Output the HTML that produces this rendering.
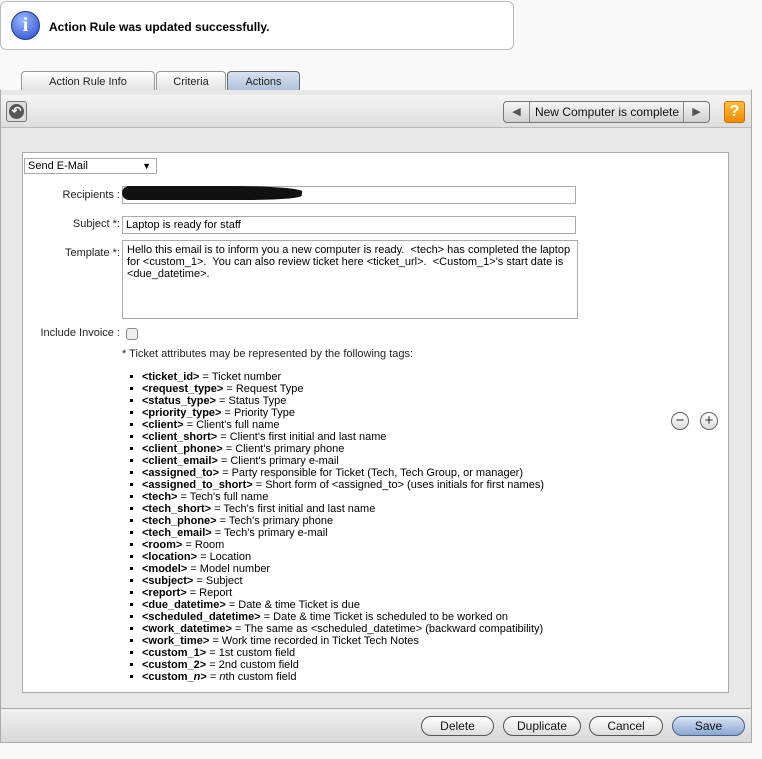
<!DOCTYPE html>
<html><head><style>
*{box-sizing:border-box;margin:0;padding:0}
body{width:762px;height:759px;background:#f9f9f9;font-family:"Liberation Sans",Arial,sans-serif;font-size:11px;color:#000;position:relative;overflow:hidden}
.a{position:absolute}
.msg{left:0;top:1px;width:514px;height:49px;border:1px solid #bbb;border-radius:6px;background:#fff}
.tab{top:71px;height:22px;border:1px solid #999;border-bottom:none;border-radius:4px 4px 0 0;background:linear-gradient(#fff,#ddd);text-align:center;line-height:20px;font-size:11px;color:#222}
.panel{left:0;top:90px;width:752px;height:653px;border:1px solid #aaa;border-top:none;background:#e8e8e8}
.inp{background:#fff;border:1px solid #aaa;height:18px;line-height:16px;padding-left:3px;font-size:11px}
.lbl{text-align:right;width:120px;font-size:11px;color:#222}
.btn{top:716px;height:20px;border:1px solid #555;border-radius:10px;background:linear-gradient(#fff,#ddd);text-align:center;line-height:18px;font-size:12px;color:#111}
ul{position:absolute;left:130px;top:371px;list-style:none;font-size:11px;line-height:12px}
li:before{content:"";display:inline-block;width:3px;height:3px;background:#000;margin:0 9px 2px 0;vertical-align:middle}
.circ{width:18px;height:18px;border:1px solid #666;border-radius:50%;background:linear-gradient(#fff,#ddd);text-align:center;line-height:15px;font-size:15px;color:#333}
</style></head><body>
<div class="a msg">
 <div class="a" style="left:10px;top:9px;width:29px;height:29px;border-radius:50%;background:radial-gradient(circle at 40% 30%,#9ab8ff,#2448c8);border:1px solid #1b3a9a;color:#fff;font:bold 20px 'Liberation Serif',serif;text-align:center;line-height:27px">i</div>
 <div class="a" style="left:48px;top:18px;font-weight:bold;font-size:12px">Action Rule was updated successfully.</div>
</div>
<div class="a tab" style="left:21px;width:134px">Action Rule Info</div>
<div class="a tab" style="left:156px;width:70px">Criteria</div>
<div class="a tab" style="left:227px;width:73px;background:linear-gradient(#d8e2f0,#a9bcd8);border-color:#667">Actions</div>
<div class="a" style="left:0;top:90px;width:751px;height:5px;background:linear-gradient(#b4c6df,#7f98bb)"></div>
<div class="a panel"></div>
<div class="a" style="left:1px;top:95px;width:750px;height:33px;background:linear-gradient(#f4f4f4,#dedede);border-bottom:1px solid #bbb"></div>
<div class="a" style="left:6px;top:101px;width:21px;height:21px;border:1px solid #777;border-radius:3px;background:#ddd"><div style="margin:2px;width:15px;height:15px;border-radius:50%;background:#555;color:#fff;font-size:12px;line-height:15px;text-align:center;font-weight:bold">&#8630;</div></div>
<div class="a" style="left:503px;top:101px;width:207px;height:22px;border:1px solid #777;border-radius:4px;background:linear-gradient(#f6f6f6,#d0d0d0)">
 <div class="a" style="left:0;top:0;width:26px;height:20px;border-right:1px solid #888;text-align:center;line-height:20px;color:#555">&#9664;</div>
 <div class="a" style="left:27px;top:0;width:152px;height:20px;text-align:center;line-height:20px;font-size:12px;color:#111">New Computer is complete</div>
 <div class="a" style="left:179px;top:0;width:26px;height:20px;border-left:1px solid #888;text-align:center;line-height:20px;color:#555">&#9654;</div>
</div>
<div class="a" style="left:724px;top:101px;width:21px;height:22px;border-radius:3px;background:linear-gradient(#ffc040,#f08a00);border:1px solid #d07000;color:#fff;font-weight:bold;font-size:16px;text-align:center;line-height:20px">?</div>
<div class="a" style="left:22px;top:152px;width:707px;height:541px;background:#fff;border:1px solid #aaa"></div>
<div class="a inp" style="left:24px;top:158px;width:133px;height:16px;line-height:14px">Send E-Mail<span class="a" style="right:5px;top:0;font-size:9px">&#9660;</span></div>
<div class="a lbl" style="top:189px;left:0">Recipients :</div>
<div class="a inp" style="left:122px;top:186px;width:454px"></div>
<div class="a" style="left:122px;top:186px;width:180px;height:14px;background:#111;border-radius:6px 40% 30% 8px;transform:skewX(-8deg)"></div>
<div class="a lbl" style="top:218px;left:0">Subject *:</div>
<div class="a inp" style="left:122px;top:216px;width:454px">Laptop is ready for staff</div>
<div class="a lbl" style="top:247px;left:0">Template *:</div>
<div class="a inp" style="left:122px;top:240px;width:456px;height:79px;line-height:12px;padding:3px 4px;font-size:11px">Hello this email is to inform you a new computer is ready.&nbsp; &lt;tech&gt; has completed the laptop for &lt;custom_1&gt;.&nbsp; You can also review ticket here &lt;ticket_url&gt;.&nbsp; &lt;Custom_1&gt;'s start date is &lt;due_datetime&gt;.</div>
<div class="a lbl" style="top:327px;left:0">Include Invoice :</div>
<div class="a" style="left:126px;top:328px;width:12px;height:12px;border:1px solid #888;border-radius:3px;background:#eee"></div>
<div class="a" style="left:122px;top:348px;color:#222">* Ticket attributes may be represented by the following tags:</div>
<ul>
<li><b>&lt;ticket_id&gt;</b> = Ticket number</li>
<li><b>&lt;request_type&gt;</b> = Request Type</li>
<li><b>&lt;status_type&gt;</b> = Status Type</li>
<li><b>&lt;priority_type&gt;</b> = Priority Type</li>
<li><b>&lt;client&gt;</b> = Client's full name</li>
<li><b>&lt;client_short&gt;</b> = Client's first initial and last name</li>
<li><b>&lt;client_phone&gt;</b> = Client's primary phone</li>
<li><b>&lt;client_email&gt;</b> = Client's primary e-mail</li>
<li><b>&lt;assigned_to&gt;</b> = Party responsible for Ticket (Tech, Tech Group, or manager)</li>
<li><b>&lt;assigned_to_short&gt;</b> = Short form of &lt;assigned_to&gt; (uses initials for first names)</li>
<li><b>&lt;tech&gt;</b> = Tech's full name</li>
<li><b>&lt;tech_short&gt;</b> = Tech's first initial and last name</li>
<li><b>&lt;tech_phone&gt;</b> = Tech's primary phone</li>
<li><b>&lt;tech_email&gt;</b> = Tech's primary e-mail</li>
<li><b>&lt;room&gt;</b> = Room</li>
<li><b>&lt;location&gt;</b> = Location</li>
<li><b>&lt;model&gt;</b> = Model number</li>
<li><b>&lt;subject&gt;</b> = Subject</li>
<li><b>&lt;report&gt;</b> = Report</li>
<li><b>&lt;due_datetime&gt;</b> = Date &amp; time Ticket is due</li>
<li><b>&lt;scheduled_datetime&gt;</b> = Date &amp; time Ticket is scheduled to be worked on</li>
<li><b>&lt;work_datetime&gt;</b> = The same as &lt;scheduled_datetime&gt; (backward compatibility)</li>
<li><b>&lt;work_time&gt;</b> = Work time recorded in Ticket Tech Notes</li>
<li><b>&lt;custom_1&gt;</b> = 1st custom field</li>
<li><b>&lt;custom_2&gt;</b> = 2nd custom field</li>
<li><b>&lt;custom_<i>n</i>&gt;</b> = <i>n</i>th custom field</li>
</ul>
<div class="a circ" style="left:671px;top:412px">&minus;</div>
<div class="a circ" style="left:700px;top:412px">+</div>
<div class="a" style="left:1px;top:708px;width:750px;height:34px;border-top:1px solid #aaa;background:linear-gradient(#f0f0f0,#d8d8d8)"></div>
<div class="a btn" style="left:421px;width:73px">Delete</div>
<div class="a btn" style="left:503px;width:78px">Duplicate</div>
<div class="a btn" style="left:589px;width:74px">Cancel</div>
<div class="a btn" style="left:672px;width:73px;background:linear-gradient(#d8e4f4,#8aa6d0);border-color:#46628f">Save</div>
</body></html>
